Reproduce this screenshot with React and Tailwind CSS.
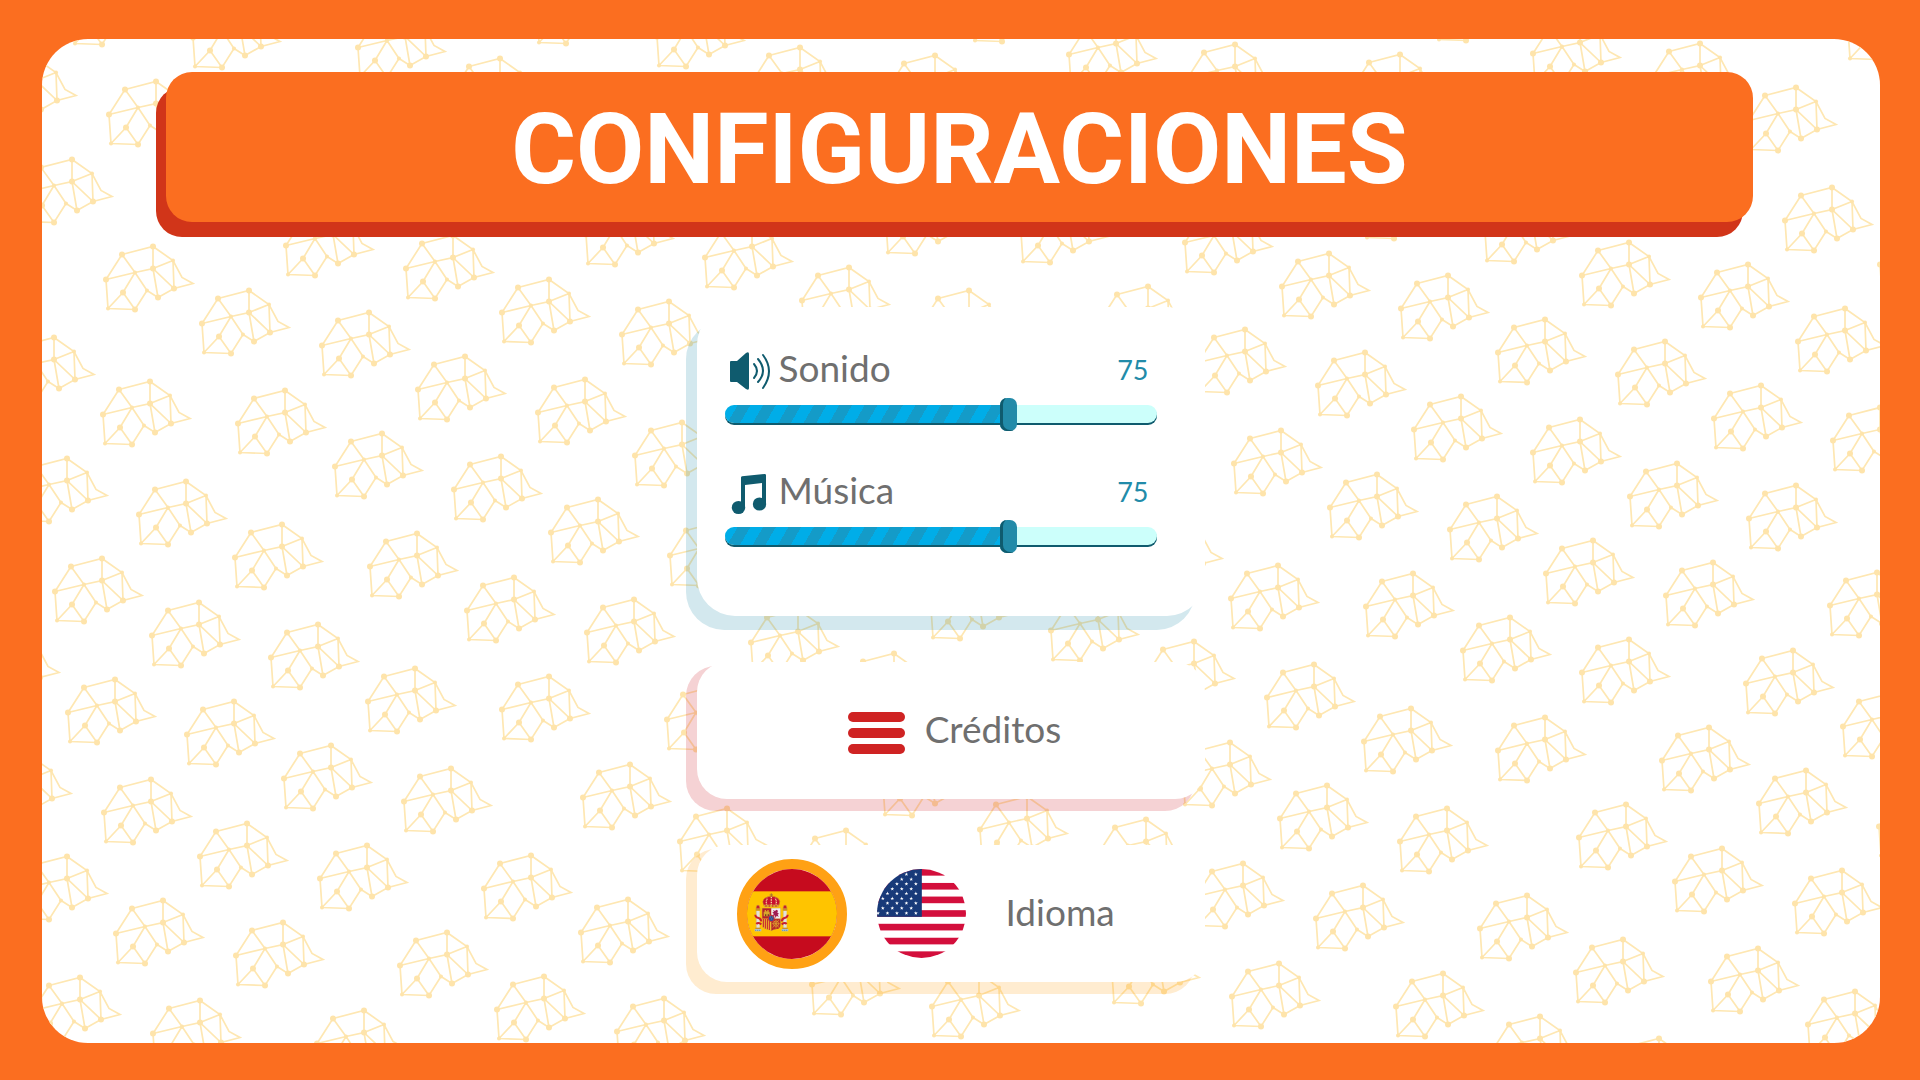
import { useState } from "react";

// Anchor points of each low-poly cap printed on the background.
const CAPS = [
  [36, 58], [156, 81], [240, 4], [405, 14], [584, -20], [120, -19], [500, 58], [633, 201], [72, 159],
  [153, 246], [249, 290], [369, 312], [549, 279], [453, 235], [333, 212], [54, 337], [465, 356], [669, 301],
  [150, 381], [285, 390], [585, 379], [382, 433], [501, 456], [67, 458], [186, 481], [282, 524], [417, 533],
  [598, 499], [682, 422], [102, 558], [199, 602], [318, 624], [514, 577], [634, 599], [19, 635], [115, 679],
  [234, 701], [415, 668], [549, 676], [31, 756], [151, 779], [331, 745], [451, 768], [630, 764], [247, 823],
  [367, 845], [531, 855], [628, 899], [67, 856], [163, 900], [283, 922], [447, 932], [544, 976], [80, 977],
  [200, 1000], [364, 1010], [664, 998], [1400, 54], [1580, 20], [1700, 43], [1484, -23], [1895, -4],
  [1796, 87], [1832, 187], [1412, 175], [1532, 198], [1629, 242], [1748, 264], [1329, 253], [1448, 275],
  [1545, 319], [1665, 341], [1845, 308], [1365, 352], [1927, 231], [1245, 329], [1461, 396], [1580, 419],
  [1281, 430], [1761, 385], [1677, 463], [1796, 485], [1880, 407], [1377, 474], [1497, 496], [1593, 540],
  [1713, 562], [1877, 572], [1278, 565], [1413, 573], [1182, 521], [1510, 617], [1629, 639], [1793, 650],
  [1194, 641], [1314, 664], [1411, 708], [1545, 717], [1890, 693], [1230, 742], [1327, 785], [1447, 808],
  [1626, 804], [1709, 727], [1806, 770], [1926, 793], [1243, 863], [1363, 885], [1527, 895], [1722, 848],
  [1842, 870], [1279, 963], [1443, 973], [1540, 1016], [1623, 939], [1758, 948], [1855, 991], [1659, 1038],
  [704, 3], [800, 47], [935, 55], [1020, -22], [1116, 21], [1235, 44], [752, 224], [849, 267], [933, 190],
  [969, 290], [1068, 199], [1232, 209], [1148, 286], [717, 522], [798, 609], [978, 575], [1098, 597],
  [894, 653], [714, 686], [930, 752], [1027, 796], [1146, 819], [727, 808], [846, 830], [859, 951],
  [979, 973], [1159, 940],
];

const CAP_DOTS = [
  [0, 0, 3], [-31, 8, 3], [-47, 33, 3], [-18, 26, 2], [0, 22, 3], [20, 14, 2], [21, 42, 3], [5, 51, 3],
  [-6, 44, 2], [-18, 63, 3], [-45, 62, 2], [-30, 46, 3],
];

function Pattern() {
  return (
    <svg
      className="absolute inset-0 h-full w-full"
      viewBox="42 38 1838 1005"
      preserveAspectRatio="xMidYMid slice"
      aria-hidden="true"
    >
      <defs>
        <g id="cap">
          <path
            d="M-31 8L0 0L20 14L29 31L40 37L21 42L5 51L-6 44L-18 63L-45 62L-47 33ZM-31 8L-18 26L-47 33M-18 26L0 22V0M0 22L20 14L21 42ZM0 22L5 51M-18 26L-6 44M-18 26L-30 46L-45 62M-30 46L-18 63"
            fill="none"
            stroke="#fee7b2"
            strokeWidth="1.7"
          />
          {CAP_DOTS.map(([x, y, r]) => (
            <circle key={`${x}:${y}`} cx={x} cy={y} r={r} fill="#fee4ab" />
          ))}
        </g>
      </defs>
      {CAPS.map(([x, y]) => (
        <use key={`${x}:${y}`} href="#cap" x={x} y={y} />
      ))}
    </svg>
  );
}

function SpeakerIcon() {
  return (
    <svg viewBox="0 0 42 40" className="h-10 w-[42px]" aria-hidden="true">
      <path d="M2 11h6L17 3q3-2 3 1v34q0 3-3 1L8 32H2q-1 0-1-1V12q0-1 1-1Z" fill="#0f5b6e" />
      <g fill="none" stroke="#0f5b6e" strokeWidth="2" strokeLinecap="round">
        <path d="M25 14q6 7 0 14" />
        <path d="M29 9q10 12 0 23" />
        <path d="M34 5q12 16 0 33" />
      </g>
    </svg>
  );
}

function MusicIcon() {
  return (
    <svg viewBox="0 0 42 40" className="h-10 w-[42px] overflow-visible" aria-hidden="true">
      <path
        d="M12 5.500q0-1 1-1.200L35.500 2q1.500-.1 1.500 1.200V31h-4V11L16 13v22h-4Z"
        fill="#0f5b6e"
      />
      <ellipse cx="9.500" cy="35.500" rx="6.700" ry="6.600" fill="#0f5b6e" />
      <ellipse cx="30.500" cy="32" rx="6.700" ry="6.600" fill="#0f5b6e" />
    </svg>
  );
}

function SpainFlag() {
  return (
    <svg viewBox="53 56 270 270" className="size-[90px]" aria-hidden="true">
      <clipPath id="es-round">
        <circle cx="188" cy="191" r="135" />
      </clipPath>
      <g clipPath="url(#es-round)">
        <rect x="53" y="56" width="270" height="270" fill="#c60b1e" />
        <rect x="53" y="123" width="270" height="135" fill="#ffc400" />
      </g>
      {/* crown */}
      <path d="M126 129v10M121 134h10" stroke="#a8722a" strokeWidth="3" />
      <path d="M104 166q-8-14 2-22 8-6 20-6t20 6q10 8 2 22Z" fill="#c8102e" stroke="#c8902b" strokeWidth="2" />
      <path d="M112 163q-3-12 3-20M126 163v-24M140 163q3-12-3-20" fill="none" stroke="#f4d79a" strokeWidth="4" strokeDasharray="3 2" />
      <rect x="104" y="163" width="44" height="7" fill="#d8a13a" />
      <path d="M108 167h38" stroke="#c60b1e" strokeWidth="3" strokeDasharray="4 6" />
      {/* shield */}
      <path d="M97 172h58v50q0 12-10 14-12 1-19 7-7-6-19-7-10-2-10-14Z" fill="#d9ae3c" />
      <rect x="99" y="174" width="27" height="31" fill="#b5202b" />
      <path d="M103 198v-14h3v-5h4v4h4v-4h4v5h3v14Z" fill="#d9a62c" />
      <path d="M107 198v-6h4v6M115 198v-6h4v6" fill="#6f4320" />
      <rect x="126" y="174" width="27" height="31" fill="#f1ecef" />
      <path d="M131 179l6 3 4-4 5 3-2 6 6 4-5 1 3 8-6-4-3 7-3-8-6 4 3-9-4-4 5-1Z" fill="#a01a52" />
      <path d="M99 205h27v36q-7-4-17-5-10-1-10-13Z" fill="#f0bd2e" />
      <path d="M102 206v25M108 206v29M114 206v31M120 206v33" stroke="#c5192c" strokeWidth="3" />
      <path d="M126 205h27v18q0 12-10 13-11 1-17 5Z" fill="#b72a28" />
      <path d="M130 208l19 24M149 208l-19 24M128 220h23M140 208v27" stroke="#dfa62f" strokeWidth="2" />
      <circle cx="140" cy="220" r="8" fill="none" stroke="#dfa62f" strokeWidth="2" />
      <ellipse cx="126" cy="204" rx="10" ry="11" fill="#c8323a" />
      <ellipse cx="126" cy="204" rx="7" ry="8" fill="#2a4f9b" />
      <path d="M123 200h2M128 200h2M126 206h2" stroke="#e6b93c" strokeWidth="2" />
      {/* pillars */}
      {[86, 167].map((x) => (
        <g key={x}>
          <rect x={x - 5} y="181" width="10" height="53" fill="#e3e0dc" />
          <path d={`M${x - 5} 181v53`} stroke="#a9a6a0" strokeWidth="1" />
          <path d={`M${x - 7} 175h14v6h-14Z`} fill="#c8902b" />
          <path d={`M${x - 6} 175q0-10 6-11 6 1 6 11Z`} fill="#c4202c" stroke="#cf9a38" strokeWidth="2" />
          <rect x={x - 8} y="232" width="16" height="4" fill="#c8902b" />
          <rect x={x - 10} y="236" width="20" height="7" fill="#b6c3ca" />
          <path d={`M${x - 9} 240h18`} stroke="#3f7ba6" strokeWidth="2" strokeDasharray="4 2" />
        </g>
      ))}
      <path d="M78 193q0 8 10 10 8 3 7 10M96 222q-10-7-15-1" fill="none" stroke="#c8202e" strokeWidth="6" />
      <path d="M175 193q0 8-10 10-8 3-7 10M157 222q10-7 15-1" fill="none" stroke="#c8202e" strokeWidth="6" />
      <path d="M81 195l6 4M172 195l-6 4" stroke="#f2d9a0" strokeWidth="1" />
    </svg>
  );
}

// Star rows of the canton: [y, first x from the right, number of stars].
const STAR_ROWS = [
  [71, 557, 2], [86, 543, 2], [100, 557, 3], [115, 543, 3], [129, 557, 4], [144, 543, 4], [158, 557, 4],
  [173, 543, 4], [188, 557, 5],
];

function UsFlag() {
  return (
    <svg viewBox="440 55 268 268" className="size-[89px]" aria-hidden="true">
      <clipPath id="us-round">
        <circle cx="574" cy="189" r="134" />
      </clipPath>
      <g clipPath="url(#us-round)">
        <rect x="440" y="55" width="268" height="268" fill="#fff" />
        {[55, 97, 138, 179, 220, 262, 303].map((y) => (
          <rect key={y} x="440" y={y} width="268" height="20" fill="#d30f3c" />
        ))}
        <rect x="440" y="55" width="135" height="144" fill="#183a79" />
        {STAR_ROWS.map(([y, x, n]) =>
          Array.from({ length: n }, (_, i) => (
            <path
              key={`${y}-${i}`}
              transform={`translate(${x - i * 28.500} ${y})`}
              d="M0-6L1.500-1.900 5.700-1.900 2.300.8 3.500 4.900 0 2.400-3.500 4.900-2.300.8-5.700-1.900-1.500-1.900Z"
              fill="#fff"
            />
          ))
        )}
      </g>
    </svg>
  );
}

const TRACK_MAX = 113;

function VolumeSlider({ id, label, icon, className = "" }) {
  const [value, setValue] = useState(75);
  return (
    <div className={className}>
      <div className="flex h-10 items-center pr-2 pl-1">
        {icon}
        <label htmlFor={id} className="ml-2 pb-1 text-[37px] leading-9 text-[#6f6f6f]">
          {label}
        </label>
        <output htmlFor={id} className="ml-auto text-[27px] leading-10 text-[#228ba9]">
          {value}
        </output>
      </div>
      <div className="relative mt-[15px] h-[18px] rounded-full bg-[#ccfffb] shadow-[0_2px_0_#0f5b6e]">
        <div
          className="h-full rounded-l-full bg-[repeating-linear-gradient(120deg,#00ade8_0_11px,#149bc8_11px_22px)]"
          style={{ width: `${(value / TRACK_MAX) * 100}%` }}
        />
        <input
          id={id}
          type="range"
          min="0"
          max={TRACK_MAX}
          value={value}
          onChange={(e) => setValue(Number(e.target.value))}
          className="absolute inset-0 m-0 h-full w-full cursor-pointer appearance-none bg-transparent [&::-webkit-slider-thumb]:h-[33px] [&::-webkit-slider-thumb]:w-[17px] [&::-webkit-slider-thumb]:appearance-none [&::-webkit-slider-thumb]:rounded-[7px] [&::-webkit-slider-thumb]:bg-[#228ba9] [&::-webkit-slider-thumb]:shadow-[inset_3px_-1px_0_#0f5b6e]"
        />
      </div>
    </div>
  );
}

const SMALL_CARD =
  "relative isolate flex h-[137px] items-center rounded-[30px] before:absolute before:top-1 before:right-[10px] before:-bottom-3 before:-left-[11px] before:-z-20 before:rounded-[30px] after:absolute after:inset-0 after:-z-10 after:rounded-[30px] after:bg-white";

export default function App() {
  const [language, setLanguage] = useState("es");
  return (
    <div className="flex min-h-screen bg-[#fb6e20] pt-[39px] pr-10 pb-[37px] pl-[42px] font-['Lato','Open_Sans',sans-serif]">
      <main className="relative isolate flex-1 overflow-hidden rounded-[46px] bg-white pt-[33px] pr-[127px] pb-12 pl-[124px]">
        <div className="absolute inset-0 -z-30">
          <Pattern />
        </div>
        <header className="flex h-[150px] items-center justify-center rounded-[26px] bg-[#fb6e20] shadow-[-10px_15px_0_#d13519]">
          <h1 className="pt-1 font-['Roboto',sans-serif] text-[99px] leading-none font-bold text-white">
            CONFIGURACIONES
          </h1>
        </header>

        <div className="mx-auto mt-[85px] flex w-[526px] flex-col gap-[46px] pr-[18px]">
          <section
            aria-label="Volumen"
            className="relative isolate h-[309px] rounded-[38px] pt-[43px] pr-12 pl-7 before:absolute before:top-[14px] before:right-[10px] before:-bottom-[14px] before:-left-[11px] before:-z-20 before:rounded-[38px] before:bg-[#228ba9]/20 after:absolute after:inset-0 after:-z-10 after:rounded-[38px] after:bg-white"
          >
            <VolumeSlider id="sonido" label="Sonido" icon={<SpeakerIcon />} />
            <VolumeSlider id="musica" label="Música" icon={<MusicIcon />} className="mt-[49px]" />
          </section>

          <button type="button" className={`${SMALL_CARD} justify-center pl-2 before:bg-[#cf2026]/20`}>
            <span className="mt-1 flex w-[57px] flex-col gap-[6px]">
              <span className="h-[10px] rounded-full bg-[#cf2323]" />
              <span className="h-[10px] rounded-full bg-[#cf2323]" />
              <span className="h-[10px] rounded-full bg-[#cf2323]" />
            </span>
            <span className="ml-5 pb-1 text-[37px] leading-10 text-[#6f6f6f]">Créditos</span>
          </button>

          <section aria-label="Idioma" className={`${SMALL_CARD} pl-10 before:bg-[#ffa114]/20`}>
            <button
              type="button"
              aria-label="Español"
              aria-pressed={language === "es"}
              onClick={() => setLanguage("es")}
              className={`rounded-full border-[10px] ${language === "es" ? "border-[#ffa114]" : "border-transparent"}`}
            >
              <SpainFlag />
            </button>
            <button
              type="button"
              aria-label="English"
              aria-pressed={language === "en"}
              onClick={() => setLanguage("en")}
              className={`ml-5 rounded-full border-[10px] ${language === "en" ? "border-[#ffa114]" : "border-transparent"}`}
            >
              <UsFlag />
            </button>
            <span className="ml-[30px] pb-1 text-[37px] leading-10 text-[#6f6f6f]">Idioma</span>
          </section>
        </div>
      </main>
    </div>
  );
}
